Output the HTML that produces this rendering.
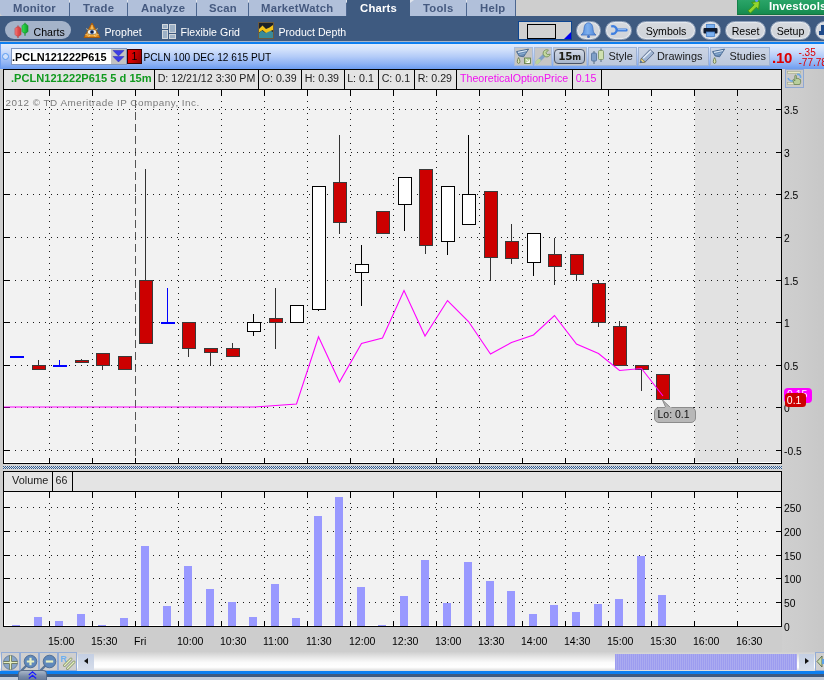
<!DOCTYPE html>
<html><head><meta charset="utf-8"><title>thinkorswim Charts</title>
<style>
*{box-sizing:border-box;margin:0;padding:0}
#root{position:absolute;left:0;top:0;width:824px;height:680px;will-change:transform;overflow:hidden}
html,body{width:824px;height:680px;overflow:hidden;background:#cdcdcd;font-family:"Liberation Sans",sans-serif;font-size:10.5px;color:#000}
.abs{position:absolute}
#tabs{left:0;top:0;width:824px;height:16px;background:#cecece}
.tab{position:absolute;top:0;height:16px;background:#b1c0da;color:#45597f;font-weight:bold;font-size:11.3px;letter-spacing:.22px;line-height:17px;white-space:nowrap;border-right:1px solid #4c668f}
.tab i{position:absolute;right:-4px;top:0;width:0;height:0;border-top:3px solid #dfe4ec;border-right:4px solid transparent}
.tab.act{background:#3e5a80;color:#fff;border-right:none}
#sub{left:0;top:16px;width:824px;height:25px;background:#3e5a80}
.sitem{position:absolute;top:10px;color:#fff;font-size:10.6px;line-height:13px;white-space:nowrap}
.pill{position:absolute;top:5px;height:19px;border-radius:9.5px;background:linear-gradient(#d6d9de,#cfd3d9);border:1px solid #8fa0b9;box-shadow:inset 0 0 1px 1px #e6e9ee;color:#000;font-size:10.6px;line-height:19px;text-align:center;white-space:nowrap}
#blue1{left:0;top:41px;width:824px;height:3px;background:#0d7ff0;border-top:1px solid #a9b4c6}
#symbar{left:0;top:44px;width:824px;height:25px;background:linear-gradient(#e2ecfc 0%,#cfdffb 25%,#b4ccf8 50%,#8fb3f4 78%,#6c9cf0 100%)}
.tb{position:absolute;top:3px;height:19px;background:linear-gradient(#cbd4e4,#bcc8dc);border:1px solid #9eb2d4;font-size:10.9px;line-height:17px;color:#1a1a1a;white-space:nowrap}
.tbg{background:#c6c6c6;border-color:#a9bbd9}
#info,#vhead{left:4px;width:777px;height:19px;background:#e4e4e4}
#info{top:70px}#vhead{top:472px}
.cell{position:absolute;top:0;height:19px;border-right:1px solid #000;font-size:10.65px;line-height:17px;color:#1c1c1c;white-space:nowrap}
#rightax{left:782px;top:69px;width:42px;height:583px;background:linear-gradient(90deg,#cfcfcf,#cccccc 50%,#c7c7c7)}
.yl{position:absolute;left:784px;font-size:10.3px;line-height:12px;color:#000}
.xl{position:absolute;top:635px;font-size:10.55px;line-height:12px;color:#000;white-space:nowrap}

#botbar{left:0;top:652px;width:824px;height:19px;background:linear-gradient(#cfcfcf 0,#e4e4e4 25%,#fbfbfb 55%,#ffffff 80%,#d9d9d9 100%)}
.bb{position:absolute;top:0;height:19px;background:#cfcfcf;border:1px solid #93acd6}
#blue2{left:0;top:671px;width:824px;height:3px;background:#0d7ff0}
#bot{left:0;top:674px;width:824px;height:3px;background:#3e5a80}
#bot2{left:0;top:677px;width:824px;height:3px;background:#c3cbd8}
</style></head>
<body>
<div id="root">
<div class="abs" id="tabs">
 <div class="tab" style="left:0;width:70px;padding-left:13px;border-bottom-left-radius:4px">Monitor<i></i></div>
 <div class="tab" style="left:70px;width:58px;padding-left:13px">Trade<i></i></div>
 <div class="tab" style="left:128px;width:69px;padding-left:13px">Analyze<i></i></div>
 <div class="tab" style="left:197px;width:52px;padding-left:12px">Scan<i></i></div>
 <div class="tab" style="left:249px;width:98px;padding-left:12px">MarketWatch<i></i></div>
 <div class="tab act" style="left:347px;width:63px;padding-left:13px">Charts</div>
 <div class="tab" style="left:410px;width:57px;padding-left:13px">Tools<i></i></div>
 <div class="tab" style="left:467px;width:49px;padding-left:13px">Help</div>
 <div class="abs" style="left:410px;top:0;width:0;height:0;border-top:3px solid #dfe4ec;border-right:4px solid transparent"></div>
 <div class="abs" style="left:737px;top:0;width:87px;height:15px;background:linear-gradient(#2ba468,#1f9a5c 50%,#178a4f);border-left:1px solid #16804a;border-bottom:1px solid #14733f;color:#fff;font-weight:bold;font-size:11.6px;line-height:11px;padding-left:31px;white-space:nowrap;overflow:hidden">Investools</div>
 <svg class="abs" style="left:747px;top:0" width="14" height="14" viewBox="0 0 14 14"><path d="M12.6 1.2 L4.6 2.4 L7 4.8 L1 10.8 L3.4 13.2 L9.4 7.2 L11.6 9.4 Z" fill="#93d62e" stroke="#3f9414" stroke-width="1" stroke-linejoin="round"/><circle cx="9.6" cy="0.4" r="1.5" fill="#5aa0f0"/></svg>
</div>
<div class="abs" id="sub">
 <div class="abs" style="left:5px;top:5px;width:66px;height:18px;border-radius:9px;background:#a4b3c9"></div>
 <svg class="abs" style="left:14px;top:6px" width="16" height="17" viewBox="0 0 16 17"><defs><linearGradient id="cr" x1="0" x2="1"><stop offset="0" stop-color="#f48080"/><stop offset=".5" stop-color="#e24e4e"/><stop offset="1" stop-color="#c83c3c"/></linearGradient><linearGradient id="cg" x1="0" x2="1"><stop offset="0" stop-color="#3ee05a"/><stop offset=".5" stop-color="#1fc23c"/><stop offset="1" stop-color="#12982a"/></linearGradient></defs><path d="M4 3.5V16" stroke="#b84848" stroke-width="1.2"/><path d="M11 .8V13.8" stroke="#1a9a30" stroke-width="1.2"/><path d="M2.6 5 H5.4 L7 6.6 V12.4 L5.4 14 H2.6 L1 12.4 V6.6Z" fill="url(#cr)" stroke="#c04040" stroke-width=".6"/><path d="M9.6 2.2 H12.4 L14 3.8 V9.4 L12.4 11 H9.6 L8 9.4 V3.8Z" fill="url(#cg)" stroke="#149028" stroke-width=".6"/></svg>
 <div class="sitem" style="left:33.5px;color:#000">Charts</div>
 <svg class="abs" style="left:83px;top:6px" width="18" height="17" viewBox="0 0 18 17"><path d="M9 1 L17 15.5 H1 Z" fill="#d8821a" stroke="#a85c0c" stroke-width="1" stroke-linejoin="round"/><path d="M9 3.6 L14.6 14.2 H3.4 Z" fill="#f2ac3c"/><path d="M9 10 L3 6.5M9 10 L15 6.5M9 10 L2 13M9 10 L16 13M9 10 V3M9 10 L5.5 15M9 10 L12.5 15" stroke="#ffe6a0" stroke-width=".7" opacity=".85"/><ellipse cx="9" cy="10" rx="4.6" ry="2.6" fill="#f6f2e8" stroke="#7a5a2a" stroke-width=".6"/><circle cx="9" cy="10" r="2" fill="#274a90"/><circle cx="9" cy="10" r=".9" fill="#080818"/></svg>
 <div class="sitem" style="left:104.5px">Prophet</div>
 <svg class="abs" style="left:162px;top:8px" width="14" height="15" viewBox="0 0 14 15" shape-rendering="crispEdges"><rect x=".5" y=".5" width="5" height="4" fill="#9db1c6" stroke="#d2d7dc"/><rect x="7.5" y=".5" width="6" height="8" fill="#9db1c6" stroke="#d2d7dc"/><rect x=".5" y="6.5" width="5" height="8" fill="#9db1c6" stroke="#d2d7dc"/><rect x="7.5" y="10.5" width="6" height="4" fill="#9db1c6" stroke="#d2d7dc"/></svg>
 <div class="sitem" style="left:180.5px">Flexible Grid</div>
 <svg class="abs" style="left:258px;top:6px" width="16" height="17" viewBox="0 0 16 17"><rect x=".5" y=".5" width="15" height="16" fill="#1e2228" stroke="#6a5a40"/><path d="M1 11 L4 8.5 L7.5 11 L11 8 L15 10 V16 H1Z" fill="#3a8a9a"/><path d="M1 7 L4.5 3.5 L8 7 L11.5 5.5 L15 3 V8 L11 9.5 L8 11 L4.5 8 L1 10.5Z" fill="#f2c21a"/></svg>
 <div class="sitem" style="left:278.5px">Product Depth</div>
 <div class="abs" style="left:518px;top:5px;width:54px;height:19px;background:#d0d0d0;border:1px solid #0d4590"></div>
 <div class="abs" style="left:527px;top:8px;width:29px;height:15px;border:1px solid #000;background:#d2d2d2"></div>
 <div class="abs" style="left:564px;top:16px;width:0;height:0;border-bottom:7px solid #0000ee;border-left:7px solid transparent"></div>
 <div class="pill" style="left:576px;width:25px"></div>
 <svg class="abs" style="left:579px;top:5px" width="19" height="19" viewBox="0 0 19 19"><defs><linearGradient id="bg1" x1="0" x2="1"><stop offset="0" stop-color="#4f8ade"/><stop offset=".45" stop-color="#7fb0ee"/><stop offset="1" stop-color="#4a84d8"/></linearGradient></defs><path d="M9.5 1.8 C6.2 1.8 5.2 5 5 8.2 C4.8 11.4 3.6 12.8 2 14 H17 C15.4 12.8 14.2 11.4 14 8.2 C13.8 5 12.8 1.8 9.5 1.8Z" fill="url(#bg1)" stroke="#3f70c0" stroke-width=".8"/><circle cx="9.5" cy="15.6" r="1.5" fill="#3f70c0"/></svg>
 <div class="pill" style="left:605px;width:27px"></div>
 <svg class="abs" style="left:610px;top:8px" width="18" height="12" viewBox="0 0 18 12"><path d="M1.2 2.6 A3.8 3.8 0 1 1 1.2 9.4" fill="none" stroke="#3f7fe0" stroke-width="2.3"/><path d="M7.4 6 H16.2" stroke="#3f7fe0" stroke-width="3" stroke-linecap="round"/><path d="M8 5.6 H16" stroke="#8fbaf4" stroke-width="1"/></svg>
 <div class="pill" style="left:636px;width:60px">Symbols</div>
 <div class="pill" style="left:700px;width:21px"></div>
 <svg class="abs" style="left:703px;top:8px" width="15" height="13" viewBox="0 0 15 13"><rect x="3.5" y=".5" width="8" height="4" fill="#7ab0f0" stroke="#4a80c8" stroke-width=".8"/><rect x=".5" y="4" width="14" height="5.5" rx="1" fill="#0e1a30"/><rect x="3.5" y="8" width="8" height="4.5" fill="#7ab0f0" stroke="#4a80c8" stroke-width=".8"/></svg>
 <div class="pill" style="left:725px;width:41px">Reset</div>
 <div class="pill" style="left:770px;width:41px">Setup</div>
 <div class="pill" style="left:815px;width:24px"></div>
 <svg class="abs" style="left:819px;top:9px" width="6" height="11" viewBox="0 0 6 11"><path d="M2 0 H6 V6 H2Z M0 6 H6 V10 H0Z" fill="#1e4a8a"/></svg>
</div>
<div class="abs" id="blue1"></div>
<div class="abs" id="symbar">
 <div class="abs" style="left:0;top:0;width:1px;height:25px;background:#6c9cf0"></div>
 <div class="abs" style="left:2px;top:9px;width:7px;height:7px;border-radius:50%;border:1.5px solid #5a9bf0;background:#cfe0fb"></div>
 <div class="abs" style="left:11px;top:4px;width:116px;height:17px;background:#fff;border:1px solid #8297bf;font-weight:bold;font-size:10.9px;line-height:17px;text-indent:0;white-space:nowrap;background:linear-gradient(#f2f5fb,#fff 40%)">.PCLN121222P615</div>
 <div class="abs" style="left:111px;top:5px;width:15px;height:15px;background:#c3c3c3"></div>
 <svg class="abs" style="left:112px;top:6px" width="13" height="13" viewBox="0 0 13 13"><path d="M1 .5 H12 L6.5 6Z M1 6.5 H12 L6.5 12Z" fill="#3c3ce6" stroke="#2a2ab0" stroke-width=".5"/></svg>
 <div class="abs" style="left:127px;top:5px;width:15px;height:15px;background:linear-gradient(110deg,#e80000 0%,#d00000 45%,#8a0000 100%);border:1px solid #3a0000;font-size:10.5px;line-height:13px;text-align:center">1</div>
 <div class="abs" style="left:143.5px;top:7px;font-size:10.15px;line-height:13px;white-space:nowrap">PCLN 100 DEC 12 615 PUT</div>
 <div class="tb tbg" style="left:514px;width:19px"></div>
 <svg class="abs" style="left:515px;top:4px" width="18" height="17" viewBox="0 0 18 17"><path d="M1.5 3.6 L13.6 1.1 L8.6 8.8 L4.1 8Z" fill="#6a8db6" stroke="#3f5f88" stroke-width=".8" stroke-linejoin="round"/><path d="M3 4.3 L12 2.5" stroke="#dbe8f6" stroke-width="1.2"/><path d="M4.5 6.5 L10.5 5" stroke="#8fb0d4" stroke-width="1"/><path d="M3.6 9.6 C2 12 1.7 15.4 3.6 15.4 C5.5 15.4 5.2 12 3.6 9.6Z" fill="#dbe4b4" stroke="#5f6f3f" stroke-width=".8"/><rect x="9.5" y="10" width="6" height="5.4" fill="#b5cf95" stroke="#5f7a45" stroke-width=".8"/><path d="M10.8 11.2 L14.2 14.4M14.3 11.6V14.5H11.4" stroke="#fff" stroke-width="1" fill="none"/></svg>
 <div class="tb tbg" style="left:534px;width:18px"></div>
 <svg class="abs" style="left:535px;top:4px" width="17" height="17" viewBox="0 0 17 17"><path d="M2 14.5 L9.5 7" stroke="#7f9fc8" stroke-width="3.4" stroke-linecap="round"/><path d="M2 14.5 L4 12.5" stroke="#bcd39a" stroke-width="3.4" stroke-linecap="round"/><path d="M13.5 2.2 A3.6 3.6 0 1 0 15.2 6.2 L12.2 6.6 L10.8 4.6Z" fill="#c5d9a0" stroke="#6f8a50" stroke-width=".8"/></svg>
 <div class="tb tbg" style="left:553px;width:34px"></div>
 <div class="abs" style="left:554px;top:5px;width:31px;height:15px;border-radius:4px;border:1px solid #4a5468;background:linear-gradient(#d3dae6,#a8b6cc);font-weight:bold;color:#1e1e14;font-family:'DejaVu Sans','Liberation Sans',sans-serif;font-size:10.5px;line-height:13px;text-align:center;letter-spacing:-.3px">15<span style="font-size:8.5px">m</span></div>
 <div class="tb" style="left:588px;width:49px;padding-left:19.5px">Style</div>
 <svg class="abs" style="left:590px;top:4px" width="16" height="17" viewBox="0 0 16 17"><path d="M4 3V16M11 .5V14" stroke="#556a80" stroke-width="1"/><rect x="1.5" y="5" width="5" height="8" rx="1" fill="#7f9fc8" stroke="#4f6f98" stroke-width=".8"/><rect x="8.5" y="2.5" width="5" height="9" rx="1" fill="#cfe0b0" stroke="#7a9060" stroke-width=".8"/></svg>
 <div class="tb" style="left:638px;width:71px;padding-left:18px">Drawings</div>
 <svg class="abs" style="left:639px;top:4px" width="17" height="17" viewBox="0 0 17 17"><path d="M1.2 14.6 L2.4 10.4 L11 1.6 L15 5.1 L6.2 14Z" fill="#9fb4d2" stroke="#46587a" stroke-width=".8" stroke-linejoin="round"/><path d="M4.2 10.2 L12 2.8" stroke="#e4edf8" stroke-width="1.3"/><path d="M1.2 14.6 L2.4 10.4 L6.2 14Z" fill="#ecd88c" stroke="#7a6a30" stroke-width=".6"/><path d="M1.2 14.6 L1.8 12.6 L3.4 14.2Z" fill="#1f66d8"/></svg>
 <div class="tb" style="left:710px;width:60px;padding-left:18.5px">Studies</div>
 <svg class="abs" style="left:711px;top:4px" width="16" height="17" viewBox="0 0 16 17"><path d="M1.5 3.6 L13.6 1.1 L8.6 8.8 L4.1 8Z" fill="#6a8db6" stroke="#3f5f88" stroke-width=".8" stroke-linejoin="round"/><path d="M3 4.3 L12 2.5" stroke="#dbe8f6" stroke-width="1.2"/><path d="M4.5 6.5 L10.5 5" stroke="#8fb0d4" stroke-width="1"/><path d="M3.6 9.6 C2 12 1.7 15.4 3.6 15.4 C5.5 15.4 5.2 12 3.6 9.6Z" fill="#dbe4b4" stroke="#5f6f3f" stroke-width=".8"/></svg>
 <div class="abs" style="left:772px;top:5.5px;font-weight:bold;font-size:15px;line-height:16px;color:#dd0000;letter-spacing:-.2px">.10</div>
 <div class="abs" style="left:798.5px;top:3.5px;font-size:10px;line-height:10px;color:#dd0000;white-space:nowrap">-.35</div>
 <div class="abs" style="left:798.5px;top:13.5px;font-size:10px;line-height:10px;color:#dd0000;white-space:nowrap">-77.78</div>
</div>

<div class="abs" id="rightax"></div>
<svg class="abs" style="left:0;top:0" width="824" height="680" viewBox="0 0 824 680" shape-rendering="crispEdges">
<rect x="4" y="90" width="777" height="373" fill="#f2f2f2"/>
<rect x="695" y="90" width="86" height="373" fill="#e2e2e2"/>
<rect x="4" y="492" width="777" height="134" fill="#f2f2f2"/>
<path d="M4.5 90 V462.5 H781 M4.5 492 V625.5 H781" fill="none" stroke="#ffffff"/>
<line x1="49.5" y1="89" x2="49.5" y2="450" stroke="#1a1a1a" stroke-dasharray="1 5"/>
<line x1="49.5" y1="491" x2="49.5" y2="612" stroke="#1a1a1a" stroke-dasharray="1 5"/>
<line x1="49.5" y1="90" x2="49.5" y2="96" stroke="#000"/>
<line x1="49.5" y1="458" x2="49.5" y2="463" stroke="#000"/>
<line x1="49.5" y1="492" x2="49.5" y2="498" stroke="#000"/>
<line x1="49.5" y1="621" x2="49.5" y2="626" stroke="#000"/>
<line x1="92.5" y1="89" x2="92.5" y2="450" stroke="#1a1a1a" stroke-dasharray="1 5"/>
<line x1="92.5" y1="491" x2="92.5" y2="612" stroke="#1a1a1a" stroke-dasharray="1 5"/>
<line x1="92.5" y1="90" x2="92.5" y2="96" stroke="#000"/>
<line x1="92.5" y1="458" x2="92.5" y2="463" stroke="#000"/>
<line x1="92.5" y1="492" x2="92.5" y2="498" stroke="#000"/>
<line x1="92.5" y1="621" x2="92.5" y2="626" stroke="#000"/>
<line x1="135.5" y1="88" x2="135.5" y2="463" stroke="#555" stroke-dasharray="8 4"/>
<line x1="135.5" y1="491" x2="135.5" y2="612" stroke="#1a1a1a" stroke-dasharray="1 5"/>
<line x1="135.5" y1="90" x2="135.5" y2="96" stroke="#000"/>
<line x1="135.5" y1="458" x2="135.5" y2="463" stroke="#000"/>
<line x1="135.5" y1="492" x2="135.5" y2="498" stroke="#000"/>
<line x1="135.5" y1="621" x2="135.5" y2="626" stroke="#000"/>
<line x1="178.5" y1="89" x2="178.5" y2="450" stroke="#1a1a1a" stroke-dasharray="1 5"/>
<line x1="178.5" y1="491" x2="178.5" y2="612" stroke="#1a1a1a" stroke-dasharray="1 5"/>
<line x1="178.5" y1="90" x2="178.5" y2="96" stroke="#000"/>
<line x1="178.5" y1="458" x2="178.5" y2="463" stroke="#000"/>
<line x1="178.5" y1="492" x2="178.5" y2="498" stroke="#000"/>
<line x1="178.5" y1="621" x2="178.5" y2="626" stroke="#000"/>
<line x1="221.5" y1="89" x2="221.5" y2="450" stroke="#1a1a1a" stroke-dasharray="1 5"/>
<line x1="221.5" y1="491" x2="221.5" y2="612" stroke="#1a1a1a" stroke-dasharray="1 5"/>
<line x1="221.5" y1="90" x2="221.5" y2="96" stroke="#000"/>
<line x1="221.5" y1="458" x2="221.5" y2="463" stroke="#000"/>
<line x1="221.5" y1="492" x2="221.5" y2="498" stroke="#000"/>
<line x1="221.5" y1="621" x2="221.5" y2="626" stroke="#000"/>
<line x1="264.5" y1="89" x2="264.5" y2="450" stroke="#1a1a1a" stroke-dasharray="1 5"/>
<line x1="264.5" y1="491" x2="264.5" y2="612" stroke="#1a1a1a" stroke-dasharray="1 5"/>
<line x1="264.5" y1="90" x2="264.5" y2="96" stroke="#000"/>
<line x1="264.5" y1="458" x2="264.5" y2="463" stroke="#000"/>
<line x1="264.5" y1="492" x2="264.5" y2="498" stroke="#000"/>
<line x1="264.5" y1="621" x2="264.5" y2="626" stroke="#000"/>
<line x1="307.5" y1="89" x2="307.5" y2="450" stroke="#1a1a1a" stroke-dasharray="1 5"/>
<line x1="307.5" y1="491" x2="307.5" y2="612" stroke="#1a1a1a" stroke-dasharray="1 5"/>
<line x1="307.5" y1="90" x2="307.5" y2="96" stroke="#000"/>
<line x1="307.5" y1="458" x2="307.5" y2="463" stroke="#000"/>
<line x1="307.5" y1="492" x2="307.5" y2="498" stroke="#000"/>
<line x1="307.5" y1="621" x2="307.5" y2="626" stroke="#000"/>
<line x1="350.5" y1="89" x2="350.5" y2="450" stroke="#1a1a1a" stroke-dasharray="1 5"/>
<line x1="350.5" y1="491" x2="350.5" y2="612" stroke="#1a1a1a" stroke-dasharray="1 5"/>
<line x1="350.5" y1="90" x2="350.5" y2="96" stroke="#000"/>
<line x1="350.5" y1="458" x2="350.5" y2="463" stroke="#000"/>
<line x1="350.5" y1="492" x2="350.5" y2="498" stroke="#000"/>
<line x1="350.5" y1="621" x2="350.5" y2="626" stroke="#000"/>
<line x1="393.5" y1="89" x2="393.5" y2="450" stroke="#1a1a1a" stroke-dasharray="1 5"/>
<line x1="393.5" y1="491" x2="393.5" y2="612" stroke="#1a1a1a" stroke-dasharray="1 5"/>
<line x1="393.5" y1="90" x2="393.5" y2="96" stroke="#000"/>
<line x1="393.5" y1="458" x2="393.5" y2="463" stroke="#000"/>
<line x1="393.5" y1="492" x2="393.5" y2="498" stroke="#000"/>
<line x1="393.5" y1="621" x2="393.5" y2="626" stroke="#000"/>
<line x1="436.5" y1="89" x2="436.5" y2="450" stroke="#1a1a1a" stroke-dasharray="1 5"/>
<line x1="436.5" y1="491" x2="436.5" y2="612" stroke="#1a1a1a" stroke-dasharray="1 5"/>
<line x1="436.5" y1="90" x2="436.5" y2="96" stroke="#000"/>
<line x1="436.5" y1="458" x2="436.5" y2="463" stroke="#000"/>
<line x1="436.5" y1="492" x2="436.5" y2="498" stroke="#000"/>
<line x1="436.5" y1="621" x2="436.5" y2="626" stroke="#000"/>
<line x1="479.5" y1="89" x2="479.5" y2="450" stroke="#1a1a1a" stroke-dasharray="1 5"/>
<line x1="479.5" y1="491" x2="479.5" y2="612" stroke="#1a1a1a" stroke-dasharray="1 5"/>
<line x1="479.5" y1="90" x2="479.5" y2="96" stroke="#000"/>
<line x1="479.5" y1="458" x2="479.5" y2="463" stroke="#000"/>
<line x1="479.5" y1="492" x2="479.5" y2="498" stroke="#000"/>
<line x1="479.5" y1="621" x2="479.5" y2="626" stroke="#000"/>
<line x1="522.5" y1="89" x2="522.5" y2="450" stroke="#1a1a1a" stroke-dasharray="1 5"/>
<line x1="522.5" y1="491" x2="522.5" y2="612" stroke="#1a1a1a" stroke-dasharray="1 5"/>
<line x1="522.5" y1="90" x2="522.5" y2="96" stroke="#000"/>
<line x1="522.5" y1="458" x2="522.5" y2="463" stroke="#000"/>
<line x1="522.5" y1="492" x2="522.5" y2="498" stroke="#000"/>
<line x1="522.5" y1="621" x2="522.5" y2="626" stroke="#000"/>
<line x1="565.5" y1="89" x2="565.5" y2="450" stroke="#1a1a1a" stroke-dasharray="1 5"/>
<line x1="565.5" y1="491" x2="565.5" y2="612" stroke="#1a1a1a" stroke-dasharray="1 5"/>
<line x1="565.5" y1="90" x2="565.5" y2="96" stroke="#000"/>
<line x1="565.5" y1="458" x2="565.5" y2="463" stroke="#000"/>
<line x1="565.5" y1="492" x2="565.5" y2="498" stroke="#000"/>
<line x1="565.5" y1="621" x2="565.5" y2="626" stroke="#000"/>
<line x1="608.5" y1="89" x2="608.5" y2="450" stroke="#1a1a1a" stroke-dasharray="1 5"/>
<line x1="608.5" y1="491" x2="608.5" y2="612" stroke="#1a1a1a" stroke-dasharray="1 5"/>
<line x1="608.5" y1="90" x2="608.5" y2="96" stroke="#000"/>
<line x1="608.5" y1="458" x2="608.5" y2="463" stroke="#000"/>
<line x1="608.5" y1="492" x2="608.5" y2="498" stroke="#000"/>
<line x1="608.5" y1="621" x2="608.5" y2="626" stroke="#000"/>
<line x1="651.5" y1="89" x2="651.5" y2="450" stroke="#1a1a1a" stroke-dasharray="1 5"/>
<line x1="651.5" y1="491" x2="651.5" y2="612" stroke="#1a1a1a" stroke-dasharray="1 5"/>
<line x1="651.5" y1="90" x2="651.5" y2="96" stroke="#000"/>
<line x1="651.5" y1="458" x2="651.5" y2="463" stroke="#000"/>
<line x1="651.5" y1="492" x2="651.5" y2="498" stroke="#000"/>
<line x1="651.5" y1="621" x2="651.5" y2="626" stroke="#000"/>
<line x1="694.5" y1="89" x2="694.5" y2="450" stroke="#1a1a1a" stroke-dasharray="1 5"/>
<line x1="694.5" y1="491" x2="694.5" y2="612" stroke="#1a1a1a" stroke-dasharray="1 5"/>
<line x1="694.5" y1="90" x2="694.5" y2="96" stroke="#000"/>
<line x1="694.5" y1="458" x2="694.5" y2="463" stroke="#000"/>
<line x1="694.5" y1="492" x2="694.5" y2="498" stroke="#000"/>
<line x1="694.5" y1="621" x2="694.5" y2="626" stroke="#000"/>
<line x1="737.5" y1="89" x2="737.5" y2="450" stroke="#1a1a1a" stroke-dasharray="1 5"/>
<line x1="737.5" y1="491" x2="737.5" y2="612" stroke="#1a1a1a" stroke-dasharray="1 5"/>
<line x1="737.5" y1="90" x2="737.5" y2="96" stroke="#000"/>
<line x1="737.5" y1="458" x2="737.5" y2="463" stroke="#000"/>
<line x1="737.5" y1="492" x2="737.5" y2="498" stroke="#000"/>
<line x1="737.5" y1="621" x2="737.5" y2="626" stroke="#000"/>
<line x1="3" y1="109.5" x2="770" y2="109.5" stroke="#1a1a1a" stroke-dasharray="1 5"/>
<line x1="776" y1="109.5" x2="781" y2="109.5" stroke="#000"/>
<line x1="4" y1="109.5" x2="10" y2="109.5" stroke="#000"/>
<line x1="3" y1="152.5" x2="770" y2="152.5" stroke="#1a1a1a" stroke-dasharray="1 5"/>
<line x1="776" y1="152.5" x2="781" y2="152.5" stroke="#000"/>
<line x1="4" y1="152.5" x2="10" y2="152.5" stroke="#000"/>
<line x1="3" y1="194.5" x2="770" y2="194.5" stroke="#1a1a1a" stroke-dasharray="1 5"/>
<line x1="776" y1="194.5" x2="781" y2="194.5" stroke="#000"/>
<line x1="4" y1="194.5" x2="10" y2="194.5" stroke="#000"/>
<line x1="3" y1="237.5" x2="770" y2="237.5" stroke="#1a1a1a" stroke-dasharray="1 5"/>
<line x1="776" y1="237.5" x2="781" y2="237.5" stroke="#000"/>
<line x1="4" y1="237.5" x2="10" y2="237.5" stroke="#000"/>
<line x1="3" y1="280.5" x2="770" y2="280.5" stroke="#1a1a1a" stroke-dasharray="1 5"/>
<line x1="776" y1="280.5" x2="781" y2="280.5" stroke="#000"/>
<line x1="4" y1="280.5" x2="10" y2="280.5" stroke="#000"/>
<line x1="3" y1="322.5" x2="770" y2="322.5" stroke="#1a1a1a" stroke-dasharray="1 5"/>
<line x1="776" y1="322.5" x2="781" y2="322.5" stroke="#000"/>
<line x1="4" y1="322.5" x2="10" y2="322.5" stroke="#000"/>
<line x1="3" y1="365.5" x2="770" y2="365.5" stroke="#1a1a1a" stroke-dasharray="1 5"/>
<line x1="776" y1="365.5" x2="781" y2="365.5" stroke="#000"/>
<line x1="4" y1="365.5" x2="10" y2="365.5" stroke="#000"/>
<line x1="3" y1="407.5" x2="770" y2="407.5" stroke="#1a1a1a" stroke-dasharray="1 5"/>
<line x1="776" y1="407.5" x2="781" y2="407.5" stroke="#000"/>
<line x1="4" y1="407.5" x2="10" y2="407.5" stroke="#000"/>
<line x1="3" y1="450.5" x2="770" y2="450.5" stroke="#1a1a1a" stroke-dasharray="1 5"/>
<line x1="776" y1="450.5" x2="781" y2="450.5" stroke="#000"/>
<line x1="4" y1="450.5" x2="10" y2="450.5" stroke="#000"/>
<line x1="3" y1="507.5" x2="770" y2="507.5" stroke="#1a1a1a" stroke-dasharray="1 5"/>
<line x1="776" y1="507.5" x2="781" y2="507.5" stroke="#000"/>
<line x1="4" y1="507.5" x2="10" y2="507.5" stroke="#000"/>
<line x1="3" y1="531.5" x2="770" y2="531.5" stroke="#1a1a1a" stroke-dasharray="1 5"/>
<line x1="776" y1="531.5" x2="781" y2="531.5" stroke="#000"/>
<line x1="4" y1="531.5" x2="10" y2="531.5" stroke="#000"/>
<line x1="3" y1="555.5" x2="770" y2="555.5" stroke="#1a1a1a" stroke-dasharray="1 5"/>
<line x1="776" y1="555.5" x2="781" y2="555.5" stroke="#000"/>
<line x1="4" y1="555.5" x2="10" y2="555.5" stroke="#000"/>
<line x1="3" y1="578.5" x2="770" y2="578.5" stroke="#1a1a1a" stroke-dasharray="1 5"/>
<line x1="776" y1="578.5" x2="781" y2="578.5" stroke="#000"/>
<line x1="4" y1="578.5" x2="10" y2="578.5" stroke="#000"/>
<line x1="3" y1="602.5" x2="770" y2="602.5" stroke="#1a1a1a" stroke-dasharray="1 5"/>
<line x1="776" y1="602.5" x2="781" y2="602.5" stroke="#000"/>
<line x1="4" y1="602.5" x2="10" y2="602.5" stroke="#000"/>
<rect x="12" y="625" width="8" height="1" fill="#9999ff"/>
<rect x="34" y="617" width="8" height="9" fill="#9999ff"/>
<rect x="55" y="621" width="8" height="5" fill="#9999ff"/>
<rect x="77" y="614" width="8" height="12" fill="#9999ff"/>
<rect x="98" y="625" width="8" height="1" fill="#9999ff"/>
<rect x="120" y="618" width="8" height="8" fill="#9999ff"/>
<rect x="141" y="546" width="8" height="80" fill="#9999ff"/>
<rect x="163" y="606" width="8" height="20" fill="#9999ff"/>
<rect x="184" y="566" width="8" height="60" fill="#9999ff"/>
<rect x="206" y="589" width="8" height="37" fill="#9999ff"/>
<rect x="228" y="602" width="8" height="24" fill="#9999ff"/>
<rect x="249" y="617" width="8" height="9" fill="#9999ff"/>
<rect x="271" y="584" width="8" height="42" fill="#9999ff"/>
<rect x="292" y="618" width="8" height="8" fill="#9999ff"/>
<rect x="314" y="516" width="8" height="110" fill="#9999ff"/>
<rect x="335" y="497" width="8" height="129" fill="#9999ff"/>
<rect x="357" y="587" width="8" height="39" fill="#9999ff"/>
<rect x="378" y="625" width="8" height="1" fill="#9999ff"/>
<rect x="400" y="596" width="8" height="30" fill="#9999ff"/>
<rect x="421" y="560" width="8" height="66" fill="#9999ff"/>
<rect x="443" y="603" width="8" height="23" fill="#9999ff"/>
<rect x="464" y="562" width="8" height="64" fill="#9999ff"/>
<rect x="486" y="581" width="8" height="45" fill="#9999ff"/>
<rect x="507" y="591" width="8" height="35" fill="#9999ff"/>
<rect x="529" y="614" width="8" height="12" fill="#9999ff"/>
<rect x="550" y="605" width="8" height="21" fill="#9999ff"/>
<rect x="572" y="612" width="8" height="14" fill="#9999ff"/>
<rect x="594" y="604" width="8" height="22" fill="#9999ff"/>
<rect x="615" y="599" width="8" height="27" fill="#9999ff"/>
<rect x="637" y="556" width="8" height="70" fill="#9999ff"/>
<rect x="658" y="595" width="8" height="31" fill="#9999ff"/>
<rect x="10" y="356" width="14" height="2" fill="#0000ff"/>
<line x1="38.5" y1="360" x2="38.5" y2="365" stroke="#333333"/>
<rect x="32.5" y="365.5" width="13" height="4" fill="#cc0000" stroke="#3a3a3a"/>
<line x1="59.5" y1="360" x2="59.5" y2="365" stroke="#0000ff"/>
<rect x="53" y="365" width="14" height="2" fill="#0000ff"/>
<line x1="81.5" y1="359" x2="81.5" y2="360" stroke="#333333"/>
<rect x="75.5" y="360.5" width="13" height="2" fill="#cc0000" stroke="#3a3a3a"/>
<line x1="102.5" y1="365" x2="102.5" y2="370" stroke="#333333"/>
<rect x="96.5" y="353.5" width="13" height="12" fill="#cc0000" stroke="#3a3a3a"/>
<rect x="118.5" y="356.5" width="13" height="13" fill="#cc0000" stroke="#3a3a3a"/>
<line x1="145.5" y1="169" x2="145.5" y2="280" stroke="#333333"/>
<rect x="139.5" y="280.5" width="13" height="63" fill="#cc0000" stroke="#3a3a3a"/>
<line x1="167.5" y1="288" x2="167.5" y2="322" stroke="#0000ff"/>
<rect x="161" y="322" width="14" height="2" fill="#0000ff"/>
<line x1="188.5" y1="348" x2="188.5" y2="357" stroke="#333333"/>
<rect x="182.5" y="322.5" width="13" height="26" fill="#cc0000" stroke="#3a3a3a"/>
<line x1="210.5" y1="352" x2="210.5" y2="366" stroke="#333333"/>
<rect x="204.5" y="348.5" width="13" height="4" fill="#cc0000" stroke="#3a3a3a"/>
<line x1="232.5" y1="343" x2="232.5" y2="348" stroke="#333333"/>
<rect x="226.5" y="348.5" width="13" height="8" fill="#cc0000" stroke="#3a3a3a"/>
<line x1="253.5" y1="314" x2="253.5" y2="322" stroke="#000000"/>
<line x1="253.5" y1="331" x2="253.5" y2="336" stroke="#000000"/>
<rect x="247.5" y="322.5" width="13" height="9" fill="#ffffff" stroke="#000"/>
<line x1="275.5" y1="288" x2="275.5" y2="318" stroke="#333333"/>
<line x1="275.5" y1="322" x2="275.5" y2="349" stroke="#333333"/>
<rect x="269.5" y="318.5" width="13" height="4" fill="#cc0000" stroke="#3a3a3a"/>
<rect x="290.5" y="305.5" width="13" height="17" fill="#ffffff" stroke="#000"/>
<line x1="318.5" y1="309" x2="318.5" y2="311" stroke="#000000"/>
<rect x="312.5" y="186.5" width="13" height="123" fill="#ffffff" stroke="#000"/>
<line x1="339.5" y1="135" x2="339.5" y2="182" stroke="#333333"/>
<line x1="339.5" y1="222" x2="339.5" y2="234" stroke="#333333"/>
<rect x="333.5" y="182.5" width="13" height="40" fill="#cc0000" stroke="#3a3a3a"/>
<line x1="361.5" y1="245" x2="361.5" y2="264" stroke="#000000"/>
<line x1="361.5" y1="272" x2="361.5" y2="306" stroke="#000000"/>
<rect x="355.5" y="264.5" width="13" height="8" fill="#ffffff" stroke="#000"/>
<rect x="376.5" y="211.5" width="13" height="22" fill="#cc0000" stroke="#3a3a3a"/>
<line x1="404.5" y1="204" x2="404.5" y2="231" stroke="#000000"/>
<rect x="398.5" y="177.5" width="13" height="27" fill="#ffffff" stroke="#000"/>
<line x1="425.5" y1="245" x2="425.5" y2="254" stroke="#333333"/>
<rect x="419.5" y="169.5" width="13" height="76" fill="#cc0000" stroke="#3a3a3a"/>
<line x1="447.5" y1="241" x2="447.5" y2="255" stroke="#000000"/>
<rect x="441.5" y="186.5" width="13" height="55" fill="#ffffff" stroke="#000"/>
<line x1="468.5" y1="135" x2="468.5" y2="194" stroke="#000000"/>
<rect x="462.5" y="194.5" width="13" height="30" fill="#ffffff" stroke="#000"/>
<line x1="490.5" y1="257" x2="490.5" y2="281" stroke="#333333"/>
<rect x="484.5" y="191.5" width="13" height="66" fill="#cc0000" stroke="#3a3a3a"/>
<line x1="511.5" y1="224" x2="511.5" y2="241" stroke="#333333"/>
<line x1="511.5" y1="258" x2="511.5" y2="264" stroke="#333333"/>
<rect x="505.5" y="241.5" width="13" height="17" fill="#cc0000" stroke="#3a3a3a"/>
<line x1="533.5" y1="262" x2="533.5" y2="276" stroke="#000000"/>
<rect x="527.5" y="233.5" width="13" height="29" fill="#ffffff" stroke="#000"/>
<line x1="554.5" y1="238" x2="554.5" y2="254" stroke="#333333"/>
<line x1="554.5" y1="266" x2="554.5" y2="285" stroke="#333333"/>
<rect x="548.5" y="254.5" width="13" height="12" fill="#cc0000" stroke="#3a3a3a"/>
<line x1="576.5" y1="274" x2="576.5" y2="281" stroke="#333333"/>
<rect x="570.5" y="254.5" width="13" height="20" fill="#cc0000" stroke="#3a3a3a"/>
<line x1="598.5" y1="280" x2="598.5" y2="283" stroke="#333333"/>
<line x1="598.5" y1="322" x2="598.5" y2="327" stroke="#333333"/>
<rect x="592.5" y="283.5" width="13" height="39" fill="#cc0000" stroke="#3a3a3a"/>
<line x1="619.5" y1="321" x2="619.5" y2="326" stroke="#333333"/>
<rect x="613.5" y="326.5" width="13" height="39" fill="#cc0000" stroke="#3a3a3a"/>
<line x1="641.5" y1="369" x2="641.5" y2="391" stroke="#333333"/>
<rect x="635.5" y="365.5" width="13" height="4" fill="#cc0000" stroke="#3a3a3a"/>
<rect x="656.5" y="374.5" width="13" height="25" fill="#cc0000" stroke="#3a3a3a"/>
<polyline fill="none" stroke="#ff00ff" stroke-width="1.1" shape-rendering="auto" points="4,407 255,407 296.5,404 318.5,336.8 339.5,382 361.5,343.5 382.5,338 404,290.5 425,336 447.5,300.5 468.5,321.5 490.5,354 511.5,342.5 533.5,335 554.5,315.5 576.5,344 598.5,353.5 619.5,370.5 641.5,368.5 663,396"/>
<g shape-rendering="auto"><path d="M662.5 400 L666 408 H671 Z" fill="#b4b4b4" stroke="#8c8c8c" stroke-width="1"/><rect x="654.5" y="407.5" width="41" height="15" rx="4.5" fill="#b8b8b8" stroke="#8c8c8c"/><rect x="665" y="407" width="6.5" height="2" fill="#b8b8b8"/></g>
<defs><pattern id="chk" x="3" y="466" width="2" height="2" patternUnits="userSpaceOnUse"><rect width="2" height="2" fill="#dfe2e6"/><rect x="0" y="0" width="1" height="1" fill="#2f5a8f"/><rect x="1" y="1" width="1" height="1" fill="#2f5a8f"/></pattern></defs>
<rect x="3" y="464" width="779" height="7" fill="#d4d4d4"/>
<rect x="3" y="466" width="779" height="3" fill="url(#chk)"/>
<path d="M3.5 69 V463.5 H781.5 V69 M3.5 471 V626.5 H781.5 V471 M3 69.5 H782 M3 89.5 H782 M3 471.5 H782 M3 491.5 H782" fill="none" stroke="#000"/>
</svg>
<div class="yl" style="top:105px">3.5</div>
<div class="yl" style="top:148px">3</div>
<div class="yl" style="top:190px">2.5</div>
<div class="yl" style="top:233px">2</div>
<div class="yl" style="top:276px">1.5</div>
<div class="yl" style="top:318px">1</div>
<div class="yl" style="top:361px">0.5</div>
<div class="yl" style="top:403px">0</div>
<div class="yl" style="top:446px">-0.5</div>
<div class="yl" style="top:503px">250</div>
<div class="yl" style="top:527px">200</div>
<div class="yl" style="top:551px">150</div>
<div class="yl" style="top:574px">100</div>
<div class="yl" style="top:598px">50</div>
<div class="yl" style="top:622px">0</div>
<div class="xl" style="left:48px">15:00</div>
<div class="xl" style="left:91px">15:30</div>
<div class="xl" style="left:134px">Fri</div>
<div class="xl" style="left:177px">10:00</div>
<div class="xl" style="left:220px">10:30</div>
<div class="xl" style="left:263px">11:00</div>
<div class="xl" style="left:306px">11:30</div>
<div class="xl" style="left:349px">12:00</div>
<div class="xl" style="left:392px">12:30</div>
<div class="xl" style="left:435px">13:00</div>
<div class="xl" style="left:478px">13:30</div>
<div class="xl" style="left:521px">14:00</div>
<div class="xl" style="left:564px">14:30</div>
<div class="xl" style="left:607px">15:00</div>
<div class="xl" style="left:650px">15:30</div>
<div class="xl" style="left:693px">16:00</div>
<div class="xl" style="left:736px">16:30</div>
<div class="abs" id="info">
 <div class="cell" style="left:0;width:151px;color:#109a1e;font-weight:bold;font-size:11.1px;padding-left:7px">.PCLN121222P615 5 d 15m</div>
 <div class="cell" style="left:151px;width:104px;padding-left:2.7px">D: 12/21/12 3:30 PM</div>
 <div class="cell" style="left:255px;width:43px;padding-left:2.7px">O: 0.39</div>
 <div class="cell" style="left:298px;width:43px;padding-left:2.7px">H: 0.39</div>
 <div class="cell" style="left:341px;width:34px;padding-left:2.2px">L: 0.1</div>
 <div class="cell" style="left:375px;width:36px;padding-left:2.7px">C: 0.1</div>
 <div class="cell" style="left:411px;width:42px;padding-left:2.7px">R: 0.29</div>
 <div class="cell" style="left:453px;width:116px;padding-left:3px;color:#f010f0">TheoreticalOptionPrice</div>
 <div class="cell" style="left:569px;width:29px;padding-left:2.7px;color:#f010f0">0.15</div>
</div>
<div class="abs" style="left:785px;top:69px;width:19px;height:19px;background:#c9c9c9;border:1px solid #8fa8d4"></div>
<svg class="abs" style="left:786px;top:70px" width="17" height="17" viewBox="0 0 17 17"><rect x="1.5" y="1.5" width="13" height="2" fill="#e6e8c8" stroke="#9aa080" stroke-width=".5"/><rect x="1.5" y="12.5" width="9" height="2" fill="#e6e8c8" stroke="#9aa080" stroke-width=".5"/><path d="M2 8 C3 11 6 11.5 8 10.5" fill="none" stroke="#6aa8e8" stroke-width="1.6"/><path d="M11 4.5 C13.5 4 15 5.5 14.5 8" fill="none" stroke="#6aa8e8" stroke-width="1.6"/><path d="M8.2 14.5 L7 10.5 C6.6 9.3 7.8 9 8.3 10 L8.8 11 V6 C8.8 4.8 10.4 4.8 10.4 6 V8.8 C10.6 8 11.8 8.1 11.9 9 C12.2 8.3 13.3 8.5 13.3 9.4 C13.7 8.9 14.6 9.2 14.6 10 V12.5 L13.8 14.5Z" fill="#b9cf9c" stroke="#5f7a48" stroke-width=".7"/></svg>
<div class="abs" style="left:5.5px;top:97px;font-size:9.9px;line-height:12px;color:#7a7a7a;letter-spacing:.5px;white-space:nowrap">2012 © TD Ameritrade IP Company, Inc.</div>
<div class="abs" style="left:657.5px;top:408px;font-size:10.5px;line-height:12px;color:#111;white-space:nowrap">Lo: 0.1</div>
<div class="abs" style="left:784px;top:388px;width:28px;height:15px;border-radius:4px;background:#ff00ff;color:#fff;font-size:10.5px;line-height:12px;padding-left:3px;white-space:nowrap">0.15</div>
<div class="abs" style="left:785px;top:393px;width:21px;height:14px;border-radius:3.5px;background:#cc0000;color:#fff;font-size:10.5px;line-height:12px;padding-top:.5px;padding-left:1.8px;white-space:nowrap">0.1</div>
<div class="abs" id="vhead">
 <div class="cell" style="left:0;width:49px;padding-left:8px;font-size:10.9px">Volume</div>
 <div class="cell" style="left:49px;width:20px;padding-left:2.6px">66</div>
</div>

<div class="abs" id="botbar">
 <div class="bb" style="left:1px;width:19px"></div>
 <svg class="abs" style="left:2px;top:1.5px" width="17" height="17" viewBox="0 0 17 17"><circle cx="8.5" cy="8.5" r="7" fill="#8aa6c8" stroke="#5a7698" stroke-width=".8"/><path d="M8.5 1.5V15.5M1.5 8.5H15.5" stroke="#4a5a48" stroke-width="3"/><path d="M8.5 1.5V15.5M1.5 8.5H15.5" stroke="#e8f0c0" stroke-width="1.6"/></svg>
 <div class="bb" style="left:20px;width:19px"></div>
 <svg class="abs" style="left:21px;top:2px" width="18" height="17" viewBox="0 0 18 17"><path d="M1 16 L5 12" stroke="#5a7698" stroke-width="2.4" stroke-linecap="round"/><circle cx="9.5" cy="7.5" r="6.3" fill="#5f88bb" stroke="#486890" stroke-width=".9"/><path d="M9.5 3.8V11.2M5.8 7.5H13.2" stroke="#e8f0c0" stroke-width="2.2"/></svg>
 <div class="bb" style="left:39px;width:19px"></div>
 <svg class="abs" style="left:40px;top:2px" width="18" height="17" viewBox="0 0 18 17"><path d="M1 16 L5 12" stroke="#5a7698" stroke-width="2.4" stroke-linecap="round"/><circle cx="9.5" cy="7.5" r="6.3" fill="#5f88bb" stroke="#486890" stroke-width=".9"/><path d="M5.8 7.5H13.2" stroke="#e8f0c0" stroke-width="2.2"/></svg>
 <div class="bb" style="left:58px;width:19px"></div>
 <svg class="abs" style="left:59px;top:1.5px" width="17" height="17" viewBox="0 0 17 17"><text x="1.5" y="7.5" font-family="Liberation Sans,sans-serif" font-size="9" font-weight="bold" fill="#6fb0f0">R</text><path d="M5.5 11.5 L12 5" stroke="#7a8a60" stroke-width="2.8" stroke-linecap="round"/><path d="M5.5 11.5 L12 5" stroke="#e4efc0" stroke-width="1.4" stroke-linecap="round"/><path d="M8.5 14.5 L15 8" stroke="#7a8a60" stroke-width="2.8" stroke-linecap="round"/><path d="M8.5 14.5 L15 8" stroke="#e4efc0" stroke-width="1.4" stroke-linecap="round"/></svg>
 <div class="abs" style="left:78px;top:2px;width:16px;height:16px;background:linear-gradient(#c4cfe3,#d6ddea)"></div>
 <div class="abs" style="left:84px;top:5.5px;width:0;height:0;border-right:4px solid #111;border-top:3.5px solid transparent;border-bottom:3.5px solid transparent"></div>
 <div class="abs" style="left:615px;top:2px;width:182px;height:16px;background:repeating-linear-gradient(90deg,#9c9cf0 0 1px,#ababf0 1px 2px)"></div>
 <div class="abs" style="left:799px;top:2px;width:15px;height:16px;background:linear-gradient(#c4cfe3,#d6ddea)"></div>
 <div class="abs" style="left:805px;top:5.5px;width:0;height:0;border-left:4px solid #111;border-top:3.5px solid transparent;border-bottom:3.5px solid transparent"></div>
 <div class="bb" style="left:815px;width:19px"></div>
 <svg class="abs" style="left:816px;top:2px" width="8" height="15" viewBox="0 0 8 15"><path d="M1 7.5 L6 2 V13Z" fill="#c8dcb0" stroke="#5a6a48" stroke-width=".9"/><rect x="6" y="5" width="2" height="5" fill="#5aa0e8"/></svg>
</div>
<div class="abs" id="blue2"></div>
<div class="abs" id="bot"></div>
<div class="abs" id="bot2"></div>
<div class="abs" style="left:18px;top:670px;width:29px;height:10px;border-radius:4px 4px 0 0;background:linear-gradient(#a9b6c8,#7a8ca8 60%,#6a7c98);border:1px solid #5a6c88;border-bottom:none"></div>
<svg class="abs" style="left:28px;top:671px" width="9" height="8" viewBox="0 0 9 8"><path d="M.8 4 L4.5 .8 L8.2 4M.8 7.5 L4.5 4.3 L8.2 7.5" fill="none" stroke="#1a1aff" stroke-width="1.1"/></svg>

</div>
</body></html>
